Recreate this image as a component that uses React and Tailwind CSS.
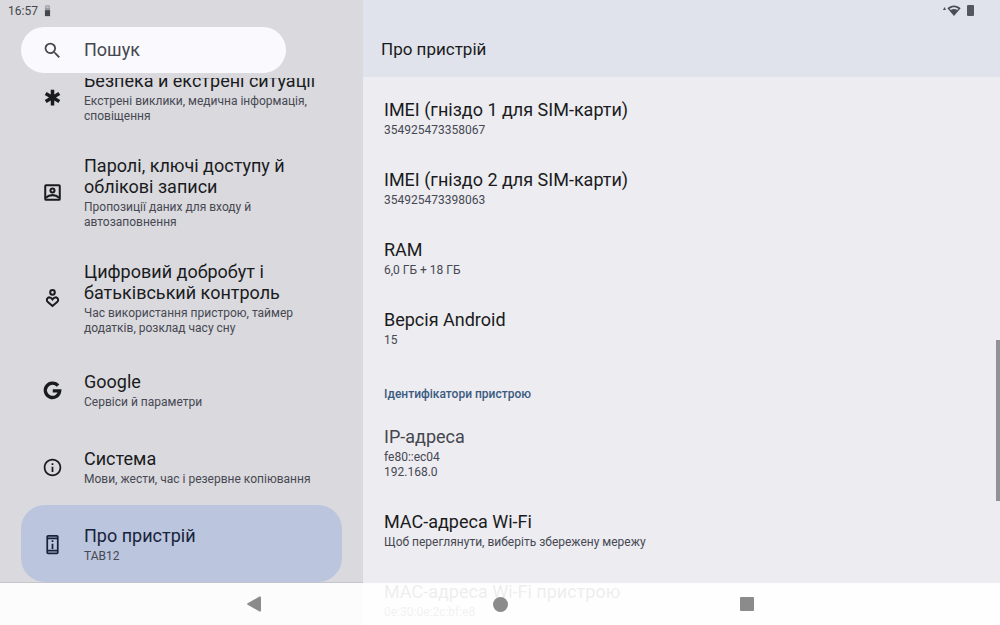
import React, { useState } from "react";
import {
  MdSearch,
  MdOutlineInfo,
  MdOutlinePermDeviceInformation,
} from "react-icons/md";

function EmergencyIcon() {
  return (
    <svg viewBox="0 0 24 24" className="h-[21px] w-[21px]" fill="currentColor">
      <path d="M20.79 9.23l-2-3.46L14 8.54V3h-4v5.54L5.21 5.77l-2 3.46L8 12l-4.79 2.77 2 3.46L10 15.46V21h4v-5.54l4.79 2.77 2-3.46L16 12z" />
    </svg>
  );
}

function AccountIcon() {
  return (
    <svg
      viewBox="0 0 24 24"
      className="h-[21px] w-[21px]"
      fill="none"
      stroke="currentColor"
      strokeWidth="2.3"
    >
      <rect x="3.7" y="3.7" width="16.6" height="16.6" rx="1" />
      <circle cx="12" cy="9.8" r="2.3" />
      <path d="M4.500 18c2-2 4.500-3 7.500-3s5.500 1 7.500 3" />
    </svg>
  );
}

function WellbeingIcon() {
  return (
    <svg
      viewBox="0 0 24 24"
      className="h-[21px] w-[21px]"
      fill="none"
      stroke="currentColor"
      strokeWidth="2.3"
    >
      <circle cx="12" cy="5" r="2.600" />
      <path d="M12 20.500l-5.300-4.600c-1.500-1.300-1.500-3.300-.2-4.400 1.300-1.200 3.400-1 4.500.4l1 1.200 1-1.200c1.100-1.400 3.200-1.600 4.500-.4 1.300 1.100 1.300 3.100-.2 4.400z" />
    </svg>
  );
}

function GoogleIcon() {
  return (
    <svg
      viewBox="0 0 24 24"
      className="h-[21px] w-[21px]"
      fill="none"
      stroke="currentColor"
      strokeWidth="3.8"
    >
      <path d="M18.300 6.500A8.200 8.200 0 1 0 20.200 12.400H12.300" />
    </svg>
  );
}

function WifiIcon() {
  return (
    <svg viewBox="0 0 24 20" className="h-[11px] w-[14px]">
      <path d="M0 6C7-1 17-1 24 6L12 20z" fill="#4b4d55" />
      <path d="M4 7c5-4 11-4 16 0l-2 2c-4-2.500-8-2.500-12 0z" fill="#e0e3eb" />
    </svg>
  );
}

const menu = [
  {
    id: "safety",
    title: "Безпека й екстрені ситуації",
    detail: "Екстрені виклики, медична інформація, сповіщення",
    icon: <EmergencyIcon />,
  },
  {
    id: "passwords",
    title: "Паролі, ключі доступу й облікові записи",
    detail: "Пропозиції даних для входу й автозаповнення",
    icon: <AccountIcon />,
  },
  {
    id: "wellbeing",
    title: "Цифровий добробут і батьківський контроль",
    detail: "Час використання пристрою, таймер додатків, розклад часу сну",
    icon: <WellbeingIcon />,
  },
  {
    id: "google",
    title: "Google",
    detail: "Сервіси й параметри",
    icon: <GoogleIcon />,
  },
  {
    id: "system",
    title: "Система",
    detail: "Мови, жести, час і резервне копіювання",
    icon: <MdOutlineInfo className="h-[21px] w-[21px]" />,
  },
  {
    id: "about",
    title: "Про пристрій",
    detail: "TAB12",
    icon: <MdOutlinePermDeviceInformation className="h-[21px] w-[21px]" />,
  },
];

const hardware = [
  { title: "IMEI (гніздо 1 для SIM-карти)", lines: ["354925473358067"] },
  { title: "IMEI (гніздо 2 для SIM-карти)", lines: ["354925473398063"] },
  { title: "RAM", lines: ["6,0 ГБ + 18 ГБ"] },
  { title: "Версія Android", lines: ["15"] },
];

const identifiers = [
  { title: "IP-адреса", lines: ["fe80::ec04", "192.168.0"], muted: true },
  {
    title: "MAC-адреса Wi-Fi",
    lines: ["Щоб переглянути, виберіть збережену мережу"],
  },
  { title: "MAC-адреса Wi-Fi пристрою", lines: ["0e:30:0e:2c:bf:e8"] },
];

function MenuItem({ item, active, onSelect }) {
  return (
    <a
      href={"#" + item.id}
      onClick={onSelect}
      aria-current={active ? "page" : undefined}
      className={
        active
          ? "flex min-h-[77px] shrink-0 items-center gap-[21px] rounded-3xl bg-[#bbc5de] px-[21px] pt-4 pb-[15px] text-[#17233a]"
          : "flex min-h-[77px] shrink-0 items-center gap-[21px] rounded-3xl px-[21px] pt-4 pb-[15px] text-[#1a1b20]"
      }
    >
      <span className="shrink-0">{item.icon}</span>
      <span className="flex flex-col gap-[3px]">
        <span className="text-lg leading-[21px]">{item.title}</span>
        <span className="text-xs leading-[15px] text-[#474851]">
          {item.detail}
        </span>
      </span>
    </a>
  );
}

function InfoRow({ row }) {
  return (
    <div className="pt-4 pb-[15px]">
      <dt
        className={
          row.muted
            ? "mb-[3px] text-lg leading-[21px] text-[#45464e]"
            : "mb-[3px] text-lg leading-[21px] text-[#1a1b20]"
        }
      >
        {row.title}
      </dt>
      {row.lines.map((line) => (
        <dd key={line} className="text-xs leading-[15px] text-[#474851]">
          {line}
        </dd>
      ))}
    </div>
  );
}

export default function App() {
  const [selected, setSelected] = useState("about");
  const [query, setQuery] = useState("");

  return (
    <div className="relative flex h-screen overflow-hidden bg-[#ececf1] font-['Roboto',sans-serif]">
      <aside className="flex w-[36.3%] flex-col bg-[#d9d9de]">
        <div className="flex h-[27px] shrink-0 items-start gap-1.5 pt-[3px] pl-2 text-xs leading-4 text-[#45464e]">
          <span>16:57</span>
          <svg viewBox="0 0 8 14" className="mt-0.5 h-3 w-[7px]">
            <path d="M2 3V1h4v2" fill="none" stroke="#85868c" />
            <rect x="1" y="3" width="6" height="3" fill="#9a9ba1" />
            <rect x="1" y="6" width="6" height="7" fill="#45464e" />
          </svg>
        </div>
        <div className="shrink-0 px-[21px]">
          <label className="flex h-[46px] w-[265px] max-w-full items-center gap-[21px] rounded-full bg-[#f9f9fe] px-[21px] text-[#45464e]">
            <MdSearch className="h-[21px] w-[21px] shrink-0" />
            <input
              type="text"
              aria-label="Пошук"
              placeholder="Пошук"
              value={query}
              onChange={(e) => setQuery(e.target.value)}
              className="w-full min-w-0 bg-transparent text-lg outline-none placeholder:text-[#45464e]"
            />
          </label>
        </div>
        <nav className="mt-[5px] mb-[42px] flex min-h-0 flex-1 flex-col justify-end overflow-hidden border-b border-[#c3c4cc] px-[21px]">
          {menu.map((item) => (
            <MenuItem
              key={item.id}
              item={item}
              active={item.id === selected}
              onSelect={() => setSelected(item.id)}
            />
          ))}
        </nav>
      </aside>

      <main className="relative flex min-w-0 flex-1 flex-col">
        <header className="flex h-[77px] shrink-0 flex-col bg-[#e0e3eb]">
          <div className="flex h-[27px] items-start justify-end pt-[5px] pr-[26px]">
            <svg viewBox="0 0 4 4" className="mt-0.5 mr-px h-[3px] w-[3px]">
              <path d="M2 0l2 4H0z" fill="#4b4d55" />
            </svg>
            <WifiIcon />
            <span className="ml-1.5 h-[11px] w-[7px] rounded-[1px] bg-[#55575f]" />
          </div>
          <h1 className="pt-3 pl-[18px] text-[17px] leading-[21px] text-[#1a1b20]">
            Про пристрій
          </h1>
        </header>
        <section className="min-h-0 flex-1 overflow-hidden px-[21px] pt-1.5">
          <dl>
            {hardware.map((row) => (
              <InfoRow key={row.title} row={row} />
            ))}
          </dl>
          <h2 className="pt-6 pb-2 text-xs leading-[15px] font-medium text-[#3a5a80]">
            Ідентифікатори пристрою
          </h2>
          <dl>
            {identifiers.map((row) => (
              <InfoRow key={row.title} row={row} />
            ))}
          </dl>
        </section>
        {/* scroll thumb */}
        <div className="absolute top-[340px] right-0 h-[161px] w-1 bg-[#909298]" />
      </main>

      {/* system navigation, translucent over both panes */}
      <div className="absolute inset-x-0 bottom-0 flex h-[42px] items-center justify-center bg-white/92 text-[#8b8b8b]">
        <div className="flex w-[507px] items-center justify-between">
          <button type="button" aria-label="Назад">
            <svg viewBox="0 0 14 16" className="h-4 w-3.5" fill="currentColor">
              <path d="M12.500.6Q14 0 14 1.500v13q0 1.500-1.500.9L.6 8.800Q-.4 8 .6 7.200z" />
            </svg>
          </button>
          <button type="button" aria-label="Додому">
            <span className="block h-[15px] w-[15px] rounded-full bg-current" />
          </button>
          <button type="button" aria-label="Огляд">
            <span className="block h-3.5 w-3.5 rounded-[1px] bg-current" />
          </button>
        </div>
      </div>
    </div>
  );
}
